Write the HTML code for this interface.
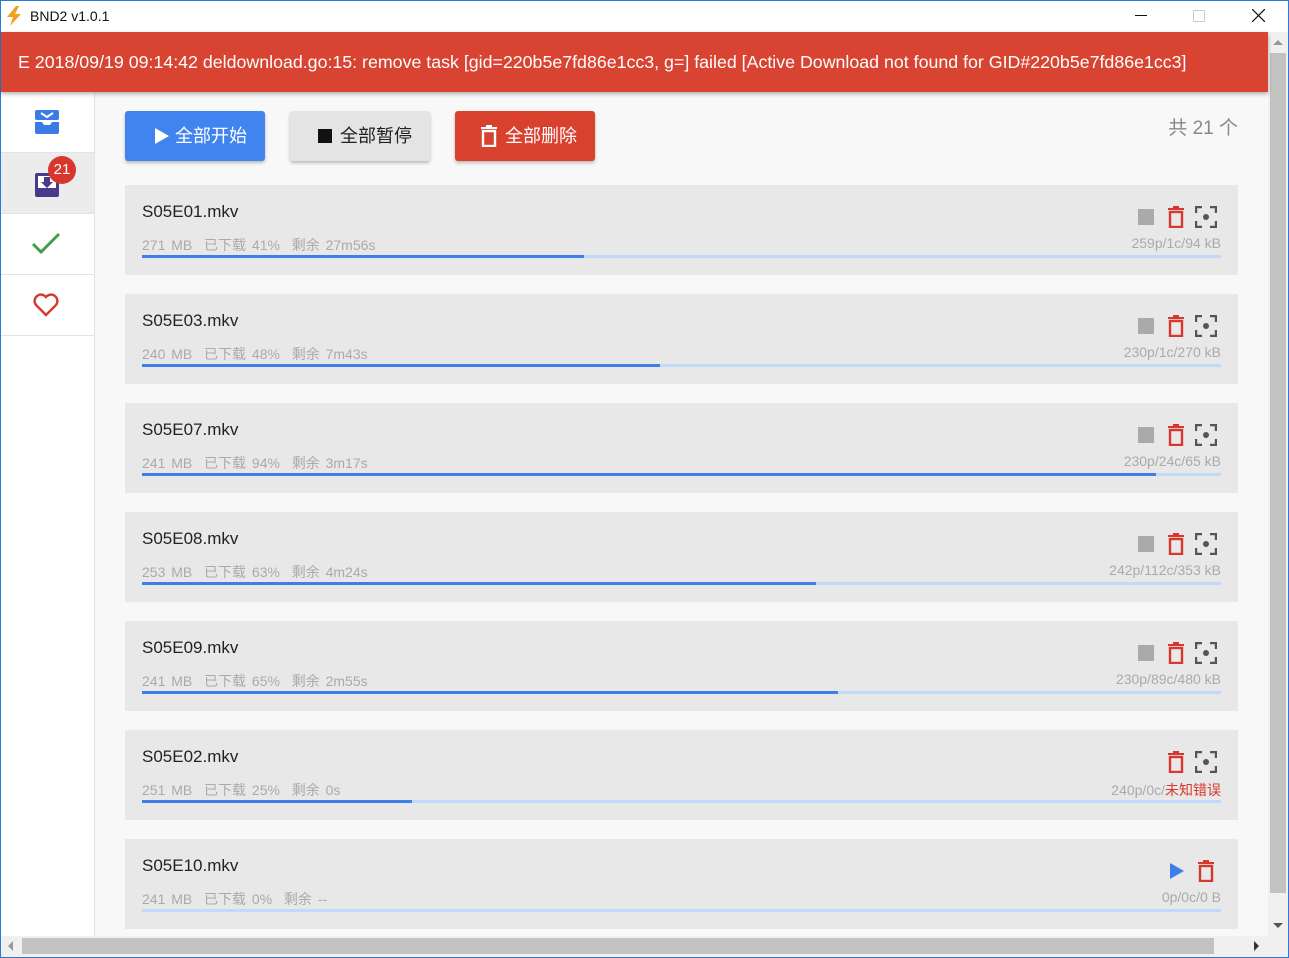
<!DOCTYPE html>
<html><head><meta charset="utf-8"><style>
*{margin:0;padding:0;box-sizing:border-box}
body{width:1289px;height:958px;overflow:hidden;font-family:"Liberation Sans","Noto Sans CJK SC",sans-serif;background:#fff;position:relative}
.win{position:absolute;left:0;top:0;width:1289px;height:958px;border:1px solid #2b79d8;pointer-events:none}
.title{position:absolute;left:0;top:0;width:1289px;height:32px;background:#fff;font-size:14px;color:#111}
.banner{position:absolute;left:1px;top:32px;width:1267px;height:60px;background:#d84332;color:#fff;font-size:17.8px;line-height:60px;padding-left:17px;box-shadow:0 2px 4px rgba(0,0,0,.3);z-index:3;white-space:nowrap;overflow:hidden}
.side{position:absolute;left:1px;top:92px;width:94px;height:844px;background:#fff;border-right:1px solid #e3e3e3}
.si{height:61px;border-bottom:1px solid #e3e3e3;position:relative}
.main{position:absolute;left:95px;top:92px;width:1173px;height:844px;background:#f8f8f8;overflow:hidden}
.btn{position:absolute;top:19px;height:50px;border-radius:3px;font-size:18px;line-height:50px;box-shadow:0 2px 3px rgba(0,0,0,.25);padding-left:28px}
.card{position:absolute;left:30px;width:1113px;height:90px;background:#e8e8e8}
.nm{position:absolute;left:17px;top:17px;font-size:17px;color:#222}
.mt{position:absolute;left:17px;top:50px;font-size:14px;color:#aaa;word-spacing:2px}
.rt{position:absolute;right:17px;top:50px;font-size:14px;color:#aaa}
.bar{position:absolute;left:17px;top:70px;width:1079px;height:3px;background:#c2d9fa}
.bar i{display:block;height:3px;background:#3d7ee8}
.ic{position:absolute;top:21px}
.vs{position:absolute;left:1268px;top:32px;width:20px;height:904px;background:#f0f0f0}
.hs{position:absolute;left:1px;top:936px;width:1267px;height:21px;background:#f0f0f0}
</style></head><body>
<div class="title">
<svg style="position:absolute;left:5px;top:6px" width="18" height="20" viewBox="0 0 18 20"><path d="M11 0L2 11h6l-3 9 11-12h-6l4-8z" fill="#f0a020"/></svg>
<span style="position:absolute;left:30px;top:8px">BND2 v1.0.1</span>
<div style="position:absolute;left:1135px;top:15px;width:12px;height:1px;background:#111"></div>
<div style="position:absolute;left:1193px;top:10px;width:12px;height:12px;border:1px solid #ccc"></div>
<svg style="position:absolute;left:1252px;top:9px" width="13" height="13"><path d="M0 0L13 13M13 0L0 13" stroke="#111" stroke-width="1.2"/></svg>
</div>
<div class="banner">E 2018/09/19 09:14:42 deldownload.go:15: remove task [gid=220b5e7fd86e1cc3, g=] failed [Active Download not found for GID#220b5e7fd86e1cc3]</div>
<div class="side">
<div class="si"><svg style="position:absolute;left:34px;top:18px" width="24" height="24" viewBox="0 0 24 24"><rect x="0" y="0" width="24" height="10" rx="2" fill="#3b7be6"/><path d="M6 3l6 4 6-4" stroke="#fff" stroke-width="2" fill="none"/><path d="M0 12h7l2 3h6l2-3h7v10a2 2 0 0 1-2 2H2a2 2 0 0 1-2-2z" fill="#3b7be6"/></svg></div>
<div class="si" style="background:#ececec"><svg style="position:absolute;left:34px;top:20px" width="24" height="24" viewBox="0 0 24 24"><path d="M0 2a2 2 0 0 1 2-2h20a2 2 0 0 1 2 2v20a2 2 0 0 1-2 2H2a2 2 0 0 1-2-2z" fill="#4a3a8c"/><rect x="3" y="3" width="18" height="12" fill="#fff"/><path d="M9 4h6v5h3l-6 6-6-6h3z" fill="#4a3a8c"/></svg>
<div style="position:absolute;left:47px;top:3px;width:28px;height:28px;border-radius:50%;background:#d8372e;color:#fff;font-size:15px;line-height:28px;text-align:center">21</div></div>
<div class="si"><svg style="position:absolute;left:30px;top:17px" width="30" height="24" viewBox="0 0 30 24"><path d="M2 13l8 8L28 3" stroke="#43a047" stroke-width="3" fill="none"/></svg></div>
<div class="si"><svg style="position:absolute;left:32px;top:18px" width="26" height="24" viewBox="0 0 26 24"><path d="M13 22L3 12a5.5 5.5 0 0 1 10-8 5.5 5.5 0 0 1 10 8z" stroke="#d8372e" stroke-width="2.4" fill="none"/></svg></div>
</div>
<div class="main">
<div class="btn" style="left:30px;width:140px;background:#4184ef;color:#fff"><svg style="position:absolute;left:30px;top:17px" width="14" height="16"><path d="M0 0L14 8L0 16z" fill="#fff"/></svg><span style="padding-left:22px">全部开始</span></div>
<div class="btn" style="left:195px;width:140px;background:#e4e4e4;color:#222"><span style="position:absolute;left:28px;top:18px;width:14px;height:14px;background:#111"></span><span style="padding-left:22px">全部暂停</span></div>
<div class="btn" style="left:360px;width:140px;background:#d9412f;color:#fff"><svg style="position:absolute;left:26px;top:14px" width="16" height="22" viewBox="0 0 16 22"><path d="M5 0h6v2h5v2H0V2h5z" fill="#fff"/><rect x="2" y="6" width="12" height="15" stroke="#fff" stroke-width="2.4" fill="none"/></svg><span style="padding-left:22px">全部删除</span></div>
<div style="position:absolute;right:30px;top:21px;font-size:19px;color:#888">共 21 个</div>

<div class="card" style="top:93px"><div class="nm">S05E01.mkv</div><div class="mt">271 MB &nbsp;已下载 41% &nbsp;剩余 27m56s</div><div class="rt">259p/1c/94 kB</div><div class="bar"><i style="width:41%"></i></div>
<div class="ic" style="left:1013px;top:24px;width:16px;height:16px;background:#aaa"></div>
<svg class="ic" style="left:1042px" width="18" height="22" viewBox="0 0 16 22"><path d="M5 0h6v2h5v2H0V2h5z" fill="#d8372e"/><rect x="2" y="6" width="12" height="15" stroke="#d8372e" stroke-width="2.4" fill="none"/></svg>
<svg class="ic" style="left:1070px" width="22" height="22" viewBox="0 0 22 22"><path d="M1 7V1h6M15 1h6v6M21 15v6h-6M7 21H1v-6" stroke="#555" stroke-width="2.4" fill="none"/><circle cx="11" cy="11" r="3" fill="#555"/></svg></div>

<div class="card" style="top:202px"><div class="nm">S05E03.mkv</div><div class="mt">240 MB &nbsp;已下载 48% &nbsp;剩余 7m43s</div><div class="rt">230p/1c/270 kB</div><div class="bar"><i style="width:48%"></i></div>
<div class="ic" style="left:1013px;top:24px;width:16px;height:16px;background:#aaa"></div>
<svg class="ic" style="left:1042px" width="18" height="22" viewBox="0 0 16 22"><path d="M5 0h6v2h5v2H0V2h5z" fill="#d8372e"/><rect x="2" y="6" width="12" height="15" stroke="#d8372e" stroke-width="2.4" fill="none"/></svg>
<svg class="ic" style="left:1070px" width="22" height="22" viewBox="0 0 22 22"><path d="M1 7V1h6M15 1h6v6M21 15v6h-6M7 21H1v-6" stroke="#555" stroke-width="2.4" fill="none"/><circle cx="11" cy="11" r="3" fill="#555"/></svg></div>

<div class="card" style="top:311px"><div class="nm">S05E07.mkv</div><div class="mt">241 MB &nbsp;已下载 94% &nbsp;剩余 3m17s</div><div class="rt">230p/24c/65 kB</div><div class="bar"><i style="width:94%"></i></div>
<div class="ic" style="left:1013px;top:24px;width:16px;height:16px;background:#aaa"></div>
<svg class="ic" style="left:1042px" width="18" height="22" viewBox="0 0 16 22"><path d="M5 0h6v2h5v2H0V2h5z" fill="#d8372e"/><rect x="2" y="6" width="12" height="15" stroke="#d8372e" stroke-width="2.4" fill="none"/></svg>
<svg class="ic" style="left:1070px" width="22" height="22" viewBox="0 0 22 22"><path d="M1 7V1h6M15 1h6v6M21 15v6h-6M7 21H1v-6" stroke="#555" stroke-width="2.4" fill="none"/><circle cx="11" cy="11" r="3" fill="#555"/></svg></div>

<div class="card" style="top:420px"><div class="nm">S05E08.mkv</div><div class="mt">253 MB &nbsp;已下载 63% &nbsp;剩余 4m24s</div><div class="rt">242p/112c/353 kB</div><div class="bar"><i style="width:62.5%"></i></div>
<div class="ic" style="left:1013px;top:24px;width:16px;height:16px;background:#aaa"></div>
<svg class="ic" style="left:1042px" width="18" height="22" viewBox="0 0 16 22"><path d="M5 0h6v2h5v2H0V2h5z" fill="#d8372e"/><rect x="2" y="6" width="12" height="15" stroke="#d8372e" stroke-width="2.4" fill="none"/></svg>
<svg class="ic" style="left:1070px" width="22" height="22" viewBox="0 0 22 22"><path d="M1 7V1h6M15 1h6v6M21 15v6h-6M7 21H1v-6" stroke="#555" stroke-width="2.4" fill="none"/><circle cx="11" cy="11" r="3" fill="#555"/></svg></div>

<div class="card" style="top:529px"><div class="nm">S05E09.mkv</div><div class="mt">241 MB &nbsp;已下载 65% &nbsp;剩余 2m55s</div><div class="rt">230p/89c/480 kB</div><div class="bar"><i style="width:64.5%"></i></div>
<div class="ic" style="left:1013px;top:24px;width:16px;height:16px;background:#aaa"></div>
<svg class="ic" style="left:1042px" width="18" height="22" viewBox="0 0 16 22"><path d="M5 0h6v2h5v2H0V2h5z" fill="#d8372e"/><rect x="2" y="6" width="12" height="15" stroke="#d8372e" stroke-width="2.4" fill="none"/></svg>
<svg class="ic" style="left:1070px" width="22" height="22" viewBox="0 0 22 22"><path d="M1 7V1h6M15 1h6v6M21 15v6h-6M7 21H1v-6" stroke="#555" stroke-width="2.4" fill="none"/><circle cx="11" cy="11" r="3" fill="#555"/></svg></div>

<div class="card" style="top:638px"><div class="nm">S05E02.mkv</div><div class="mt">251 MB &nbsp;已下载 25% &nbsp;剩余 0s</div><div class="rt">240p/0c/<span style="color:#d8372e">未知错误</span></div><div class="bar"><i style="width:25%"></i></div>
<svg class="ic" style="left:1042px" width="18" height="22" viewBox="0 0 16 22"><path d="M5 0h6v2h5v2H0V2h5z" fill="#d8372e"/><rect x="2" y="6" width="12" height="15" stroke="#d8372e" stroke-width="2.4" fill="none"/></svg>
<svg class="ic" style="left:1070px" width="22" height="22" viewBox="0 0 22 22"><path d="M1 7V1h6M15 1h6v6M21 15v6h-6M7 21H1v-6" stroke="#555" stroke-width="2.4" fill="none"/><circle cx="11" cy="11" r="3" fill="#555"/></svg></div>

<div class="card" style="top:747px"><div class="nm">S05E10.mkv</div><div class="mt">241 MB &nbsp;已下载 0% &nbsp;剩余 --</div><div class="rt">0p/0c/0 B</div><div class="bar"></div>
<svg class="ic" style="left:1045px;top:24px" width="14" height="16"><path d="M0 0L14 8L0 16z" fill="#3d7ee8"/></svg>
<svg class="ic" style="left:1072px" width="18" height="22" viewBox="0 0 16 22"><path d="M5 0h6v2h5v2H0V2h5z" fill="#d8372e"/><rect x="2" y="6" width="12" height="15" stroke="#d8372e" stroke-width="2.4" fill="none"/></svg></div>
</div>
<div class="vs"><div style="position:absolute;left:5px;top:8px;width:0;height:0;border-left:5px solid transparent;border-right:5px solid transparent;border-bottom:5px solid #999"></div><div style="position:absolute;left:2px;top:21px;width:16px;height:840px;background:#c2c2c2"></div><div style="position:absolute;left:5px;top:891px;width:0;height:0;border-left:5px solid transparent;border-right:5px solid transparent;border-top:5px solid #555"></div></div>
<div class="hs"><div style="position:absolute;left:7px;top:5px;width:0;height:0;border-top:5px solid transparent;border-bottom:5px solid transparent;border-right:5px solid #999"></div><div style="position:absolute;left:21px;top:2px;width:1192px;height:16px;background:#c2c2c2"></div><div style="position:absolute;left:1253px;top:5px;width:0;height:0;border-top:5px solid transparent;border-bottom:5px solid transparent;border-left:5px solid #333"></div></div>
<div style="position:absolute;left:1268px;top:936px;width:20px;height:21px;background:#f0f0f0"></div>
<div class="win"></div>
</body></html>
